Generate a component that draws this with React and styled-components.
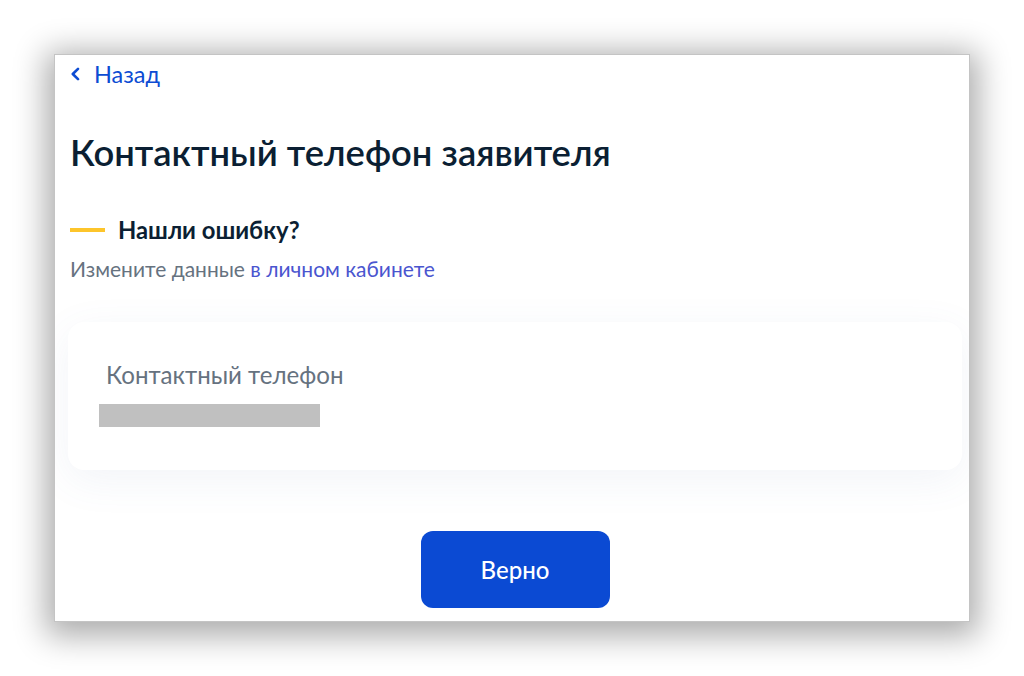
import styled, { createGlobalStyle } from 'styled-components';

const Global = createGlobalStyle`
  body {
    margin: 0;
    background: #fff;
    font-family: Lato, "Noto Sans", sans-serif;
  }
`;

const Page = styled.div`
  width: 1024px;
  height: 676px;
  padding: 54px 0 0 54px;
  box-sizing: border-box;
`;

const Shot = styled.div`
  width: 916px;
  height: 568px;
  box-sizing: border-box;
  border: 1px solid #c4c4c4;
  background: #fff;
  box-shadow: 0 6px 30px 8px rgba(0, 0, 0, 0.33);
  padding: 5px 0 0 15px;
  display: flex;
  flex-direction: column;
  overflow: hidden;
`;

const Back = styled.a`
  display: flex;
  align-items: center;
  gap: 13px;
  color: #0d4cd3;
  font-size: 23.5px;
  line-height: 28px;
  text-decoration: none;
  svg {
    width: 11px;
    height: 14px;
  }
`;

const Title = styled.h1`
  margin: 43px 0 0;
  font-size: 36.4px;
  line-height: 42px;
  font-weight: 600;
  color: #0b1f33;
`;

const Warn = styled.div`
  margin-top: 43px;
  display: flex;
  align-items: center;
  gap: 13px;
  font-size: 23.8px;
  line-height: 28px;
  font-weight: 700;
  color: #0b1f33;
  &::before {
    content: '';
    width: 35px;
    height: 4px;
    background: #fdc52b;
  }
`;

const Hint = styled.p`
  margin: 13px 0 0;
  font-size: 21px;
  line-height: 24px;
  color: #66727f;
  a {
    color: #4a55cf;
    text-decoration: none;
  }
`;

const Body = styled.div`
  margin: 0 0 0 -2px;
  padding-top: 41px;
  width: 894px;
  display: flex;
  flex-direction: column;
  align-items: center;
`;

const Card = styled.div`
  align-self: stretch;
  height: 148px;
  box-sizing: border-box;
  background: #fff;
  border-radius: 16px;
  box-shadow: 0 10px 40px rgba(90, 110, 160, 0.08);
  padding: 38px 0 0 31px;
  display: flex;
  flex-direction: column;
`;

const Label = styled.div`
  font-size: 24.1px;
  line-height: 30px;
  color: #66727f;
  padding-left: 7px;
`;

const Masked = styled.div`
  margin-top: 14px;
  width: 221px;
  height: 23px;
  background: #c0c0c0;
`;

const Button = styled.button`
  margin-top: 61px;
  width: 189px;
  height: 77px;
  border: none;
  border-radius: 12px;
  background: #0b4ad3;
  color: #fff;
  font-family: Lato, "Noto Sans", sans-serif;
  font-size: 24px;
  font-weight: 500;
`;

export default function App() {
  return (
    <Page>
      <Global />
      <Shot>
        <Back href="#">
          <svg viewBox="0 0 11 14" fill="none">
            <path d="M8 1.8L2.8 7L8 12.2" stroke="#0d4cd3" strokeWidth="2.6" strokeLinecap="round" strokeLinejoin="round" />
          </svg>
          Назад
        </Back>
        <Title>Контактный телефон заявителя</Title>
        <Warn>Нашли ошибку?</Warn>
        <Hint>
          Измените данные <a href="#">в личном кабинете</a>
        </Hint>
        <Body>
          <Card>
            <Label>Контактный телефон</Label>
            <Masked />
          </Card>
          <Button>Верно</Button>
        </Body>
      </Shot>
    </Page>
  );
}
